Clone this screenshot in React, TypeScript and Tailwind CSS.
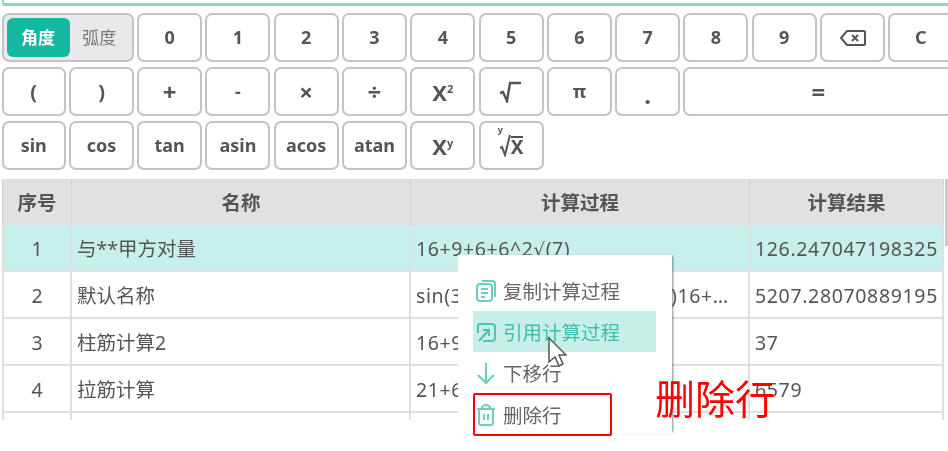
const font = { fontFamily: '"Noto Sans", "Noto Sans CJK SC", sans-serif' }

const row1 = ['0', '1', '2', '3', '4', '5', '6', '7', '8', '9']
const row2 = ['(', ')', '+', '-', '×', '÷']
const row3 = ['sin', 'cos', 'tan', 'asin', 'acos', 'atan']

const rows: { no: string; name: string; calc: React.ReactNode; result: string; active?: boolean }[] = [
  {
    no: '1',
    name: '与**甲方对量',
    calc: <>16+9+6+6^2<span className="font-['DejaVu_Sans'] text-[18px]">√</span>(7)</>,
    result: '126.247047198325',
    active: true,
  },
  { no: '2', name: '默认名称', calc: 'sin(30)+cos(60)+tan(45)+(5)16+9+6+6', result: '5207.28070889195' },
  { no: '3', name: '柱筋计算2', calc: '16+9+6', result: '37' },
  { no: '4', name: '拉筋计算', calc: '21+6+6', result: '6579' },
  { no: '', name: '', calc: '', result: '' },
]

function Key({ children, className = '' }: { children?: React.ReactNode; className?: string }) {
  return (
    <button className={`h-[49px] flex items-center justify-center bg-white border-2 border-[#c4c4c4] rounded-[7px] text-[#555] text-[18px] font-bold ${className}`}>
      {children}
    </button>
  )
}

function Sup({ base, sup }: { base: string; sup: string }) {
  return (
    <span className="text-[22px] leading-none">
      {base}
      <sup className="text-[11px] -top-[8px]">{sup}</sup>
    </span>
  )
}

function CopyIcon() {
  return (
    <svg width="22" height="24" viewBox="0 0 22 24" fill="none" stroke="#6fcdbd" strokeWidth="2">
      <path d="M7 2h10a3 3 0 0 1 3 3v13" />
      <rect x="2" y="5" width="15" height="17" rx="3" />
      <path d="M6 10h7M6 14h7M6 18h4" />
    </svg>
  )
}

function QuoteIcon() {
  return (
    <svg width="22" height="22" viewBox="0 0 22 22" fill="none" stroke="#4cc4b0" strokeWidth="2">
      <path d="M5 3h12a3 3 0 0 1 3 3v11a3 3 0 0 1-3 3H8" />
      <path d="M3 12V5a2 2 0 0 1 2-2" />
      <path d="M4 20l9-10M8 9h6v6" />
    </svg>
  )
}

function TrashIcon() {
  return (
    <svg width="20" height="24" viewBox="0 0 20 24" fill="none" stroke="#6fcdbd" strokeWidth="2">
      <rect x="3" y="6" width="14" height="16" rx="2" />
      <path d="M1 6h18M6 5a4 3 0 0 1 8 0M8 11v6M12 11v6" />
    </svg>
  )
}

function MenuItem({ icon, label, className = '' }: { icon: React.ReactNode; label: string; className?: string }) {
  return (
    <div className={`flex items-center h-[41px] w-[183px] pl-[2px] gap-[6px] text-[19.5px] text-[#666] ${className}`}>
      <span className="w-[22px] flex justify-center">{icon}</span>
      <span className="pt-[3px]">{label}</span>
    </div>
  )
}

export default function App() {
  return (
    <div className="relative w-[948px] h-[451px] overflow-hidden bg-white blur-[0.5px]" style={font}>
      <div className="ml-[2px] h-[6px] rounded-bl-[3px] border-l-2 border-b-[3px] border-[#84d9cb]" />

      <div className="mt-[7px] ml-[1.5px] grid grid-cols-[64.5px_64.5px_repeat(12,65px)] gap-x-[3.3px] gap-y-[5px] w-[1000px]">
        <div className="col-span-2 h-[49px] flex items-center p-[3px] bg-[#e9e9ec] border-2 border-[#c4c4c4] rounded-[7px] text-[17px]">
          <span className="w-[63px] h-full flex items-center justify-center bg-[#14b8a0] rounded-[6px] text-white font-bold">角度</span>
          <span className="flex-1 text-center text-[#777]">弧度</span>
        </div>
        {row1.map((k) => <Key key={k}>{k}</Key>)}
        <Key>
          <svg width="28" height="20" viewBox="0 0 28 20" fill="none" stroke="#555" strokeWidth="2">
            <path d="M8 3h17a1 1 0 0 1 1 1v12a1 1 0 0 1-1 1H8l-6-7z" />
            <path d="M13 7l6 6M19 7l-6 6" />
          </svg>
        </Key>
        <Key>C</Key>

        {row2.map((k) => (
          <Key key={k} className={k === '-' ? '' : k === '(' || k === ')' ? 'text-[20px]' : 'text-[24px]'}>{k}</Key>
        ))}
        <Key><Sup base="X" sup="2" /></Key>
        <Key>
          <svg width="24" height="22" viewBox="0 0 24 22" fill="none" stroke="#555" strokeWidth="2.4">
            <path d="M1 12l3-1 4 9 3-18h11" />
          </svg>
        </Key>
        <Key>π</Key>
        <Key className="text-[24px] pt-[6px]">.</Key>
        <Key className="col-span-4 text-[24px]">=</Key>

        {row3.map((k) => <Key key={k}>{k}</Key>)}
        <Key><Sup base="X" sup="y" /></Key>
        <Key>
          <span className="relative flex items-end pl-[1px] text-[19px] leading-none">
            <sup className="absolute -left-[1px] -top-[4px] text-[9px]">y</sup>
            <svg width="11" height="23" viewBox="0 0 11 23" fill="none" stroke="#555" strokeWidth="2">
              <path d="M0 14l2-1 3 8 5-20" />
            </svg>
            <span className="border-t-2 border-[#555]">X</span>
          </span>
        </Key>
      </div>

      <div className="relative mt-[9px] ml-[2px] h-[241px] w-[946px] overflow-hidden">
        <div className="w-[942px] grid grid-cols-[70px_339px_339px_194px] text-[#555] text-[19.5px]">
          <div className="h-[46px] pt-[2px] flex items-center justify-center bg-[#e1e0e2] border-x border-[#d4d4d6] font-bold">序号</div>
          <div className="h-[46px] pt-[2px] flex items-center justify-center bg-[#e1e0e2] border-r border-[#d4d4d6] font-bold">名称</div>
          <div className="h-[46px] pt-[2px] flex items-center justify-center bg-[#e1e0e2] border-r border-[#d4d4d6] font-bold">计算过程</div>
          <div className="h-[46px] pt-[2px] flex items-center justify-center bg-[#e1e0e2] border-r border-[#d4d4d6] font-bold">计算结果</div>
          {rows.map((r, i) => {
            const cell = `h-[47px] pt-[2px] flex items-center border-b-2 border-r-2 border-[#e0e0e0] ${r.active ? 'bg-[#c7f0ea]' : 'bg-white'}`
            return (
              <div key={i} className="contents">
                <div className={`${cell} border-l-2 justify-center`}>{r.no}</div>
                <div className={`${cell} pl-[5px]`}>{r.name}</div>
                <div className={`${cell} pl-[5px] pr-[14px] tracking-[0.6px]`}><span className="truncate">{r.calc}</span></div>
                <div className={`${cell} pl-[5px] tracking-[0.65px]`}>{r.result}</div>
              </div>
            )
          })}
        </div>
        <div className="absolute right-0 top-0 w-[3px] h-[67px] bg-[#c9c9cb]" />
      </div>

      {/* context menu */}
      <div className="absolute left-[458px] top-[255px] w-[214px] h-[178px] bg-white shadow-[2px_0_2px_-1px_rgba(60,60,60,0.6)] pt-[15px] pl-[15px]">
        <MenuItem icon={<CopyIcon />} label="复制计算过程" />
        <MenuItem icon={<QuoteIcon />} label="引用计算过程" className="bg-[#c7efe8] !text-[#3fbfa9]" />
        <MenuItem icon={<svg width="20" height="24" viewBox="0 0 20 24" fill="none" stroke="#6fcdbd" strokeWidth="2"><path d="M10 2v20M2 14l8 8 8-8" /></svg>} label="下移行" />
        <div className="w-[139px] h-[43px] border-2 border-[#f00] rounded-[2px]">
          <MenuItem icon={<TrashIcon />} label="删除行" className="!w-[135px] !h-[39px] !pl-0" />
        </div>
      </div>

      {/* cursor */}
      <svg className="absolute left-[547px] top-[336px]" width="20" height="32" viewBox="0 0 20 32" fill="#fff" stroke="#555" strokeWidth="1.5">
        <path d="M2 2v24l6-5 4 9 4-2-4-9h7z" />
      </svg>

      <div className="absolute left-[655px] top-[371px] text-[40px] leading-[56px] text-[#f00]">删除行</div>
    </div>
  )
}
